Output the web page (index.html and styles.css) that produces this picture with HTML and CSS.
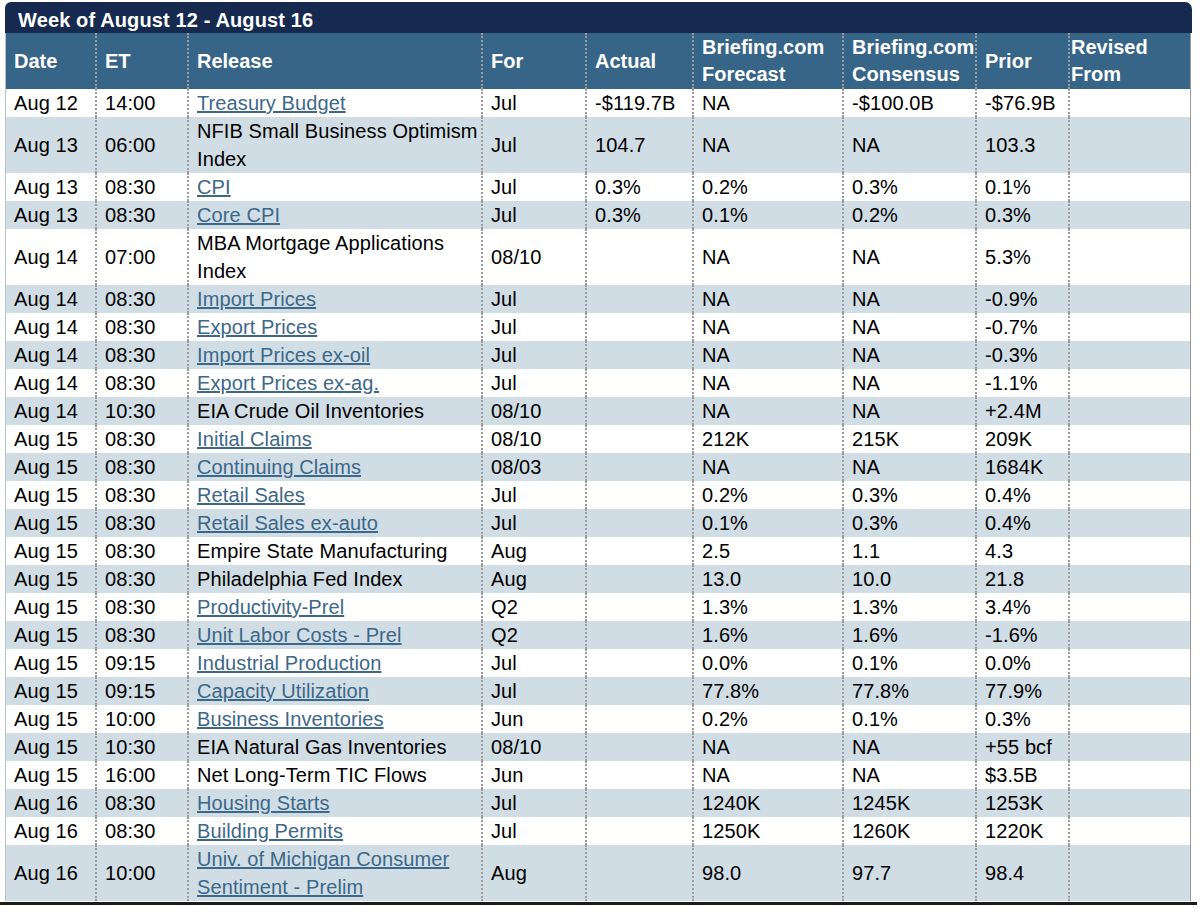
FILE: index.html
```html
<!DOCTYPE html>
<html lang="en">
<head>
<meta charset="utf-8">
<title>Economic Calendar</title>
<link rel="stylesheet" href="styles.css">
</head>
<body>
<div class="calendar">
  <div class="week-title">Week of August 12 - August 16</div>
  <table class="cal-table">
    <colgroup>
      <col class="c-date"><col class="c-et"><col class="c-release"><col class="c-for"><col class="c-actual"><col class="c-forecast"><col class="c-consensus"><col class="c-prior"><col class="c-revised">
    </colgroup>
    <thead>
      <tr>
        <th>Date</th><th>ET</th><th>Release</th><th>For</th><th>Actual</th>
        <th>Briefing.com<br>Forecast</th><th>Briefing.com<br>Consensus</th><th>Prior</th><th class="tight">Revised<br>From</th>
      </tr>
    </thead>
    <tbody>
      <tr><td>Aug 12</td><td>14:00</td><td><a href="#">Treasury Budget</a></td><td>Jul</td><td>-$119.7B</td><td>NA</td><td>-$100.0B</td><td>-$76.9B</td><td></td></tr>
      <tr class="alt"><td>Aug 13</td><td>06:00</td><td>NFIB Small Business Optimism<br>Index</td><td>Jul</td><td>104.7</td><td>NA</td><td>NA</td><td>103.3</td><td></td></tr>
      <tr><td>Aug 13</td><td>08:30</td><td><a href="#">CPI</a></td><td>Jul</td><td>0.3%</td><td>0.2%</td><td>0.3%</td><td>0.1%</td><td></td></tr>
      <tr class="alt"><td>Aug 13</td><td>08:30</td><td><a href="#">Core CPI</a></td><td>Jul</td><td>0.3%</td><td>0.1%</td><td>0.2%</td><td>0.3%</td><td></td></tr>
      <tr><td>Aug 14</td><td>07:00</td><td>MBA Mortgage Applications<br>Index</td><td>08/10</td><td></td><td>NA</td><td>NA</td><td>5.3%</td><td></td></tr>
      <tr class="alt"><td>Aug 14</td><td>08:30</td><td><a href="#">Import Prices</a></td><td>Jul</td><td></td><td>NA</td><td>NA</td><td>-0.9%</td><td></td></tr>
      <tr><td>Aug 14</td><td>08:30</td><td><a href="#">Export Prices</a></td><td>Jul</td><td></td><td>NA</td><td>NA</td><td>-0.7%</td><td></td></tr>
      <tr class="alt"><td>Aug 14</td><td>08:30</td><td><a href="#">Import Prices ex-oil</a></td><td>Jul</td><td></td><td>NA</td><td>NA</td><td>-0.3%</td><td></td></tr>
      <tr><td>Aug 14</td><td>08:30</td><td><a href="#">Export Prices ex-ag.</a></td><td>Jul</td><td></td><td>NA</td><td>NA</td><td>-1.1%</td><td></td></tr>
      <tr class="alt"><td>Aug 14</td><td>10:30</td><td>EIA Crude Oil Inventories</td><td>08/10</td><td></td><td>NA</td><td>NA</td><td>+2.4M</td><td></td></tr>
      <tr><td>Aug 15</td><td>08:30</td><td><a href="#">Initial Claims</a></td><td>08/10</td><td></td><td>212K</td><td>215K</td><td>209K</td><td></td></tr>
      <tr class="alt"><td>Aug 15</td><td>08:30</td><td><a href="#">Continuing Claims</a></td><td>08/03</td><td></td><td>NA</td><td>NA</td><td>1684K</td><td></td></tr>
      <tr><td>Aug 15</td><td>08:30</td><td><a href="#">Retail Sales</a></td><td>Jul</td><td></td><td>0.2%</td><td>0.3%</td><td>0.4%</td><td></td></tr>
      <tr class="alt"><td>Aug 15</td><td>08:30</td><td><a href="#">Retail Sales ex-auto</a></td><td>Jul</td><td></td><td>0.1%</td><td>0.3%</td><td>0.4%</td><td></td></tr>
      <tr><td>Aug 15</td><td>08:30</td><td>Empire State Manufacturing</td><td>Aug</td><td></td><td>2.5</td><td>1.1</td><td>4.3</td><td></td></tr>
      <tr class="alt"><td>Aug 15</td><td>08:30</td><td>Philadelphia Fed Index</td><td>Aug</td><td></td><td>13.0</td><td>10.0</td><td>21.8</td><td></td></tr>
      <tr><td>Aug 15</td><td>08:30</td><td><a href="#">Productivity-Prel</a></td><td>Q2</td><td></td><td>1.3%</td><td>1.3%</td><td>3.4%</td><td></td></tr>
      <tr class="alt"><td>Aug 15</td><td>08:30</td><td><a href="#">Unit Labor Costs - Prel</a></td><td>Q2</td><td></td><td>1.6%</td><td>1.6%</td><td>-1.6%</td><td></td></tr>
      <tr><td>Aug 15</td><td>09:15</td><td><a href="#">Industrial Production</a></td><td>Jul</td><td></td><td>0.0%</td><td>0.1%</td><td>0.0%</td><td></td></tr>
      <tr class="alt"><td>Aug 15</td><td>09:15</td><td><a href="#">Capacity Utilization</a></td><td>Jul</td><td></td><td>77.8%</td><td>77.8%</td><td>77.9%</td><td></td></tr>
      <tr><td>Aug 15</td><td>10:00</td><td><a href="#">Business Inventories</a></td><td>Jun</td><td></td><td>0.2%</td><td>0.1%</td><td>0.3%</td><td></td></tr>
      <tr class="alt"><td>Aug 15</td><td>10:30</td><td>EIA Natural Gas Inventories</td><td>08/10</td><td></td><td>NA</td><td>NA</td><td>+55 bcf</td><td></td></tr>
      <tr><td>Aug 15</td><td>16:00</td><td>Net Long-Term TIC Flows</td><td>Jun</td><td></td><td>NA</td><td>NA</td><td>$3.5B</td><td></td></tr>
      <tr class="alt"><td>Aug 16</td><td>08:30</td><td><a href="#">Housing Starts</a></td><td>Jul</td><td></td><td>1240K</td><td>1245K</td><td>1253K</td><td></td></tr>
      <tr><td>Aug 16</td><td>08:30</td><td><a href="#">Building Permits</a></td><td>Jul</td><td></td><td>1250K</td><td>1260K</td><td>1220K</td><td></td></tr>
      <tr class="alt"><td>Aug 16</td><td>10:00</td><td><a href="#">Univ. of Michigan Consumer<br>Sentiment - Prelim</a></td><td>Aug</td><td></td><td>98.0</td><td>97.7</td><td>98.4</td><td></td></tr>
    </tbody>
  </table>
</div>
<div class="page-rule"></div>
</body>
</html>
```
FILE: styles.css
```css
* { box-sizing: border-box; }

body {
  margin: 0;
  background: #ffffff;
  font-family: "Liberation Sans", Arial, sans-serif;
  color: #000000;
}

.calendar {
  margin: 2px 0 0 5px;
  width: 1187px;
}

.week-title {
  background: #162a50;
  color: #ffffff;
  font-weight: bold;
  font-size: 20px;
  line-height: 24px;
  height: 31px;
  padding: 6px 0 1px 13px;
  letter-spacing: 0.13px;
  border-radius: 6px 7px 0 0;
}

.cal-table {
  width: 1186px;
  table-layout: fixed;
  border-collapse: separate;
  border-spacing: 0;
  border-left: 1px solid #b9c0c6;
  border-right: 1px solid #9a9a9a;
  font-size: 20px;
}

.c-date { width: 91px; }
.c-et { width: 92px; }
.c-release { width: 294px; }
.c-for { width: 104px; }
.c-actual { width: 107px; }
.c-forecast { width: 150px; }
.c-consensus { width: 133px; }
.c-prior { width: 93px; }
.c-revised { width: 120px; }

.cal-table th,
.cal-table td {
  padding: 0 0 0 8px;
  text-align: left;
  vertical-align: middle;
  border-right: 2px dotted #9c9c9c;
}

.cal-table th:last-child,
.cal-table td:last-child {
  border-right: none;
}

.cal-table th {
  background: #366588;
  color: #ffffff;
  font-weight: bold;
  line-height: 27px;
  height: 56px;
}

.cal-table th.tight {
  padding-left: 1px;
}

.cal-table td {
  line-height: 28px;
  letter-spacing: 0.1px;
  background: #ffffff;
}

.cal-table tr.alt td {
  background: #d0dde5;
}

.cal-table a {
  color: #3d6889;
  text-decoration: underline;
}

.page-rule {
  margin-top: 1px;
  width: 1197px;
  height: 3px;
  background: #1c1c1c;
}
```
